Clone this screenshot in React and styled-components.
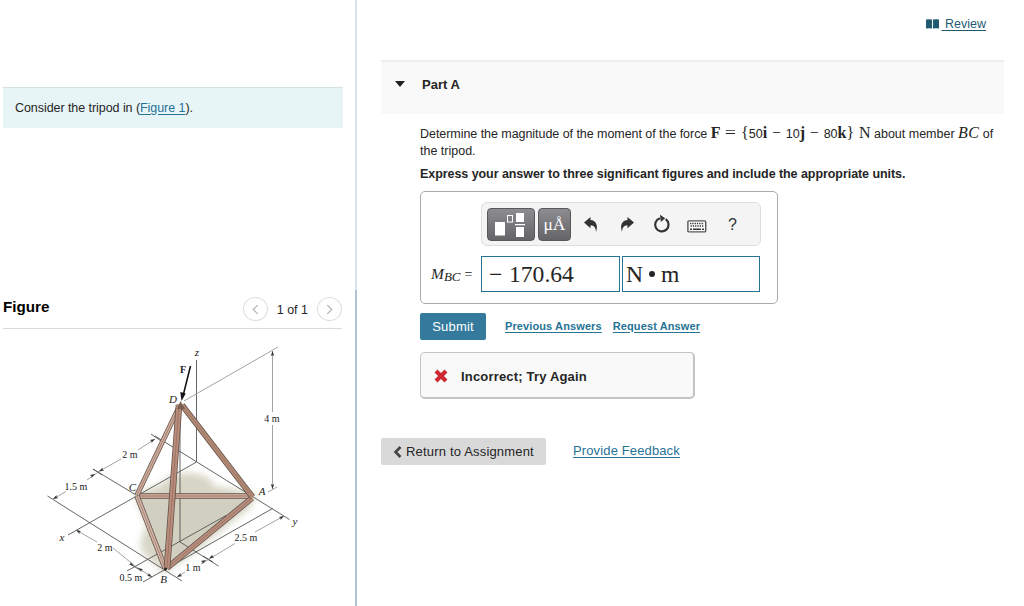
import styled, { createGlobalStyle } from "styled-components";

const bars = [
    { id: "CA", from: [138, 496], to: [250, 496], color: "#c9a294", width: 5.6 },
    { id: "CB", from: [137, 496], to: [165, 568], color: "#d3b3a4", width: 5.4 },
    { id: "DC", from: [180, 405], to: [137, 495], color: "#cfac9b", width: 5.2 },
    { id: "BA", from: [167, 568], to: [252, 498], color: "#b98d7c", width: 6 },
    { id: "DA", from: [182, 405], to: [252.5, 497], color: "#b58a75", width: 6 },
    { id: "DB", from: [179, 405], to: [167, 568], color: "#b98c7a", width: 6.6 },
]

const guides = [
    "M196.5 360V461.5",
    "M155 436L289.5 519.5",
    "M196.5 462L68 535",
    "M93 469L136 495",
    "M47.5 496L182 581",
    "M180 405V542",
    "M226 515.5L127 571",
    "M180 542L218.5 566",
    "M272.5 508.5L143 582",
]

const dimensions = [
    "M184 401L278 347",
    "M272.5 351V412M272.5 425V489",
    "M268 492L277 487",
    "M97 472.5L121 459M138 450L155 439",
    "M97 473L87 480M66 491.5L53 499",
    "M76 530L97 542M113 548L135 566L152 577",
    "M177 577L185 572M201 564L235 543.5M255 532L284 516",
]

const heads = [
    [272.5, 351, -90], [272.5, 489, 90], [155, 439, -30], [99, 471.5, 150],
    [95, 474, -30], [53, 499, 150], [76, 530, 210], [134, 566, 32],
    [138, 568, 212], [152, 577, 32], [177, 577, 150], [206, 560, -30],
    [209, 558.5, 150], [284, 516, -30],
]

const labels = [
    { text: "z", x: 197, y: 356, italic: true },
    { text: "F", x: 183, y: 373, bold: true },
    { text: "D", x: 173, y: 402.5, italic: true },
    { text: "C", x: 132.5, y: 491, italic: true },
    { text: "A", x: 262, y: 495, italic: true },
    { text: "B", x: 163.5, y: 583, italic: true },
    { text: "x", x: 62, y: 541, italic: true },
    { text: "y", x: 295, y: 525, italic: true },
    { text: "4 m", x: 272, y: 422 },
    { text: "2 m", x: 130, y: 458 },
    { text: "1.5 m", x: 76, y: 489.5 },
    { text: "2 m", x: 105, y: 551 },
    { text: "0.5 m", x: 131, y: 580.5 },
    { text: "1 m", x: 193, y: 570.5 },
    { text: "2.5 m", x: 246, y: 541 },
]

function Bar({ from, to, color, width }){
    const line = `M${from}L${to}`
    return(
        <g fill="none">
            <path d={line} stroke="#5f5049" strokeWidth={width}/>
            <path d={line} stroke={color} strokeWidth={width - 1.5}/>
            <path d={line} stroke="#7d6358" strokeWidth="0.5"/>
        </g>
    )
}

function Tripod(){
    return(
        <Drawing viewBox="0 340 343 260">
            <defs>
                <filter id="soft" x="-20%" y="-20%" width="140%" height="140%">
                    <feGaussianBlur stdDeviation="3.5"/>
                </filter>
            </defs>
            <path d="M134 494L160 485Q170 473 188 473Q211 474 214 486L257 493L250 508L190 556L164 573L143 553Q137 543 147 526Z" fill="#d7d5c6" filter="url(#soft)"/>
            <path d="M138 498H250L166 567Z" fill="#d0cfc0"/>
            <g stroke="#555" strokeWidth="0.9" fill="none">
                {guides.map((d)=> <path key={d} d={d}/>)}
            </g>
            <g stroke="#999" strokeWidth="0.9" fill="none">
                {dimensions.map((d)=> <path key={d} d={d}/>)}
            </g>
            <g fill="#333">
                {heads.map(([x, y, angle])=>(
                    <path key={`${x}-${y}`} d="M0 0L-5 -1.7L-4 0L-5 1.7Z" transform={`translate(${x} ${y}) rotate(${angle})`}/>
                ))}
            </g>
            <path d="M93 469L102 475M151 434L161 441M130 564L140 570M203 556L213 562" stroke="#555" strokeWidth="0.9"/>
            {bars.map((b)=> <Bar key={b.id} {...b}/>)}
            <path d="M177 409L180.5 401L185 409Z" fill="#7a5f54"/>
            <circle cx="165.5" cy="569" r="1.5" fill="#222"/>
            <path d="M190.5 366L183.5 394" stroke="#111" strokeWidth="1.6"/>
            <path d="M181.5 401L180.3 392L185.700 393.5Z" fill="#111"/>
            {labels.map((l)=>(
                <Label key={l.text + l.x} x={l.x} y={l.y} $italic={l.italic} $bold={l.bold}>{l.text}</Label>
            ))}
        </Drawing>
    )
}

function UndoIcon(){
    return(
        <svg width="14" height="15" viewBox="0 0 14 15">
            <path d="M0 5.5L6.5 0V3C11.500 3.300 14.500 7.500 12 15C11.800 10.500 10 8.500 6.500 8.300V11.200Z" fill="#333"/>
        </svg>
    )
}

function RedoIcon(){
    return(
        <svg width="14" height="15" viewBox="0 0 14 15">
            <path d="M14 5.5L7.5 0V3C2.500 3.300 -0.500 7.500 2 15C2.200 10.500 4 8.500 7.500 8.300V11.200Z" fill="#333"/>
        </svg>
    )
}

function RefreshIcon(){
    return(
        <svg width="18" height="20" viewBox="0 0 18 20">
            <path d="M12.600 5.200A6.700 6.700 0 1 1 7 4.300" fill="none" stroke="#333" strokeWidth="2.2"/>
            <path d="M7 0.800L12.200 4.200L7.800 8Z" fill="#333"/>
        </svg>
    )
}

function KeyboardIcon(){
    return(
        <svg width="20" height="13" viewBox="0 0 20 13">
            <rect x="0.9" y="0.9" width="17.8" height="11" rx="1" fill="#fff" stroke="#555" strokeWidth="1.4"/>
            <path d="M3 3.6H17M3.5 6H17" stroke="#333" strokeWidth="1.5" strokeDasharray="1.3 1"/>
            <path d="M3 9.2H5M6 9.2H14M15 9.2H17" stroke="#333" strokeWidth="1.4"/>
        </svg>
    )
}

function TemplateIcon(){
    return(
        <svg width="32" height="26" viewBox="0 0 32 26">
            <path d="M0 10H10V23.5H0ZM21 1H29V10H21ZM21 15H29V25H21ZM20 12H30V13.2H20Z" fill="#fff"/>
            <rect x="12.5" y="3.5" width="5" height="6.5" fill="none" stroke="#fff"/>
        </svg>
    )
}

export default function App(){
    return(
        <>
        <GlobalStyle/>
        <Page>
            <Sidebar>
                <Intro>Consider the tripod in (<Link>Figure 1</Link>).</Intro>
                <FigureHeader>
                    <h2>Figure</h2>
                    <Pager>
                        <RoundButton><Chevron viewBox="0 0 8 12"><path d="M6.5 1L1.5 6L6.5 11"/></Chevron></RoundButton>
                        <span>1 of 1</span>
                        <RoundButton><Chevron viewBox="0 0 8 12"><path d="M1.5 1L6.5 6L1.5 11"/></Chevron></RoundButton>
                    </Pager>
                </FigureHeader>
                <Tripod/>
            </Sidebar>
            <Divider/>
            <Main>
                <TopBar>
                    <svg width="13" height="10" viewBox="0 0 13 10">
                        <path d="M0 0.6Q3 -0.3 6 0.6V9.6Q3 8.7 0 9.6ZM7 0.6Q10 -0.3 13 0.6V9.6Q10 8.7 7 9.6Z" fill="#1f5a70"/>
                    </svg>
                    <ReviewLink>&nbsp;Review</ReviewLink>
                </TopBar>
                <PartHeader>
                    <Caret/>
                    <h2>Part A</h2>
                </PartHeader>
                <Question>
                    <Problem>
                        <Copy>Determine the magnitude of the moment of the force </Copy>
                        <MathText><b>F</b> <Equals>=</Equals> {"{"}<Num>50</Num><b>i</b> − <Num>10</Num><b>j</b> − <Num>80</Num><b>k</b>{"}"} N</MathText>
                        {" "}about member <Member>BC</Member> of<br/>the tripod.
                    </Problem>
                    <Instruction>Express your answer to three significant figures and include the appropriate units.</Instruction>
                    <AnswerBox>
                        <Toolbar>
                            <DarkButton $width={48}><TemplateIcon/></DarkButton>
                            <DarkButton $width={33}>μÅ</DarkButton>
                            <Tools>
                                <UndoIcon/>
                                <RedoIcon/>
                                <RefreshIcon/>
                                <KeyboardIcon/>
                                <span>?</span>
                            </Tools>
                        </Toolbar>
                        <AnswerRow>
                            <Variable><em>M<sub>BC</sub></em> <span>=</span></Variable>
                            <Field $width={139} $pad={7}><Minus>−</Minus>170.64</Field>
                            <Field $width={138} $pad={3}>N<Dot/>m</Field>
                        </AnswerRow>
                    </AnswerBox>
                    <Actions>
                        <Submit>Submit</Submit>
                        <SmallLink>Previous Answers</SmallLink>
                        <SmallLink>Request Answer</SmallLink>
                    </Actions>
                    <Feedback>
                        <svg width="14" height="14" viewBox="0 0 14 14">
                            <path d="M2 2L12 12M12 2L2 12" stroke="#cc2a30" strokeWidth="4.2"/>
                        </svg>
                        Incorrect; Try Again
                    </Feedback>
                </Question>
                <Footer>
                    <ReturnButton>
                        <svg width="9" height="12" viewBox="0 0 9 12">
                            <path d="M7.5 1L2.5 6L7.5 11" fill="none" stroke="#444" strokeWidth="2.6"/>
                        </svg>
                        Return to Assignment
                    </ReturnButton>
                    <FooterLink>Provide Feedback</FooterLink>
                </Footer>
            </Main>
        </Page>
        </>
    )
}

const GlobalStyle = createGlobalStyle`
    * {
        box-sizing: border-box;
    }
    body{
        margin: 0;
        background-color: #fff;
        color: #252525;
        font-family: "Liberation Sans", Arial, sans-serif;
        font-size: 13px;
    }
    h2, p{
        margin: 0;
    }
    button{
        font-family: inherit;
        border: none;
        padding: 0;
    }
`

const Page = styled.div`
    width: 1024px;
    height: 606px;
    display: flex;
    overflow: hidden;
`

const Sidebar = styled.aside`
    width: 355px;
    padding: 87px 12px 0 3px;
`

const Divider = styled.div`
    width: 2px;
    background: linear-gradient(#d9e3f0 290px, #b3c3d7 290px);
`

const Main = styled.main`
    flex: 1;
    padding-left: 24px;
`

const Intro = styled.div`
    height: 41px;
    padding-left: 12px;
    display: flex;
    align-items: center;
    white-space: pre;
    background-color: #e8f5f7;
    border-top: 1px solid #d5e1e3;
    font-size: 12.5px;
    letter-spacing: -0.06px;
`

const Link = styled.a`
    color: #267396;
    text-decoration: underline;
    text-underline-offset: 2px;
`

const FigureHeader = styled.div`
    width: 339px;
    height: 39px;
    margin-top: 162px;
    display: flex;
    justify-content: space-between;
    border-bottom: 1px solid #d9d9d9;
    h2{
        padding-top: 7px;
        font-size: 15.2px;
        line-height: 19px;
        color: #000;
    }
`

const Pager = styled.div`
    display: flex;
    gap: 9px;
    padding-top: 7px;
    span{
        padding-top: 6px;
        font-size: 12.5px;
        line-height: 15px;
    }
`

const RoundButton = styled.button`
    width: 25px;
    height: 24px;
    display: flex;
    align-items: center;
    justify-content: center;
    background-color: #fff;
    border: 1px solid #dedede;
    border-radius: 50%;
`

const Chevron = styled.svg`
    width: 7px;
    height: 11px;
    fill: none;
    stroke: #b5b5b5;
    stroke-width: 1.5;
`

const Drawing = styled.svg`
    display: block;
    width: 343px;
    height: 260px;
    margin: 11px 0 0 -3px;
`

const Label = styled.text`
    font-family: "Liberation Serif", serif;
    font-size: ${(p)=> p.$italic ? 11 : 10}px;
    font-style: ${(p)=> p.$italic ? "italic" : "normal"};
    font-weight: ${(p)=> p.$bold ? 700 : 400};
    text-anchor: middle;
    fill: #222;
`

const TopBar = styled.div`
    height: 60px;
    padding: 16px 38px 0 0;
    display: flex;
    justify-content: flex-end;
    gap: 3px;
    svg{
        margin-top: 3px;
    }
`

const ReviewLink = styled.a`
    color: #1f5a70;
    font-size: 12.5px;
    line-height: 17px;
    text-decoration: underline;
    text-underline-offset: 2px;
`

const PartHeader = styled.div`
    width: 623px;
    height: 54px;
    padding: 0 0 8px 14px;
    display: flex;
    align-items: center;
    gap: 17px;
    background-color: #f9f9f9;
    border-top: 2px solid #ededed;
    h2{
        font-size: 13px;
    }
`

const Caret = styled.div`
    border: 5px solid transparent;
    border-top: 6px solid #222;
    border-bottom: none;
`

const Question = styled.section`
    padding: 11px 0 0 39px;
`

const Problem = styled.p`
    height: 42px;
    line-height: 17px;
    font-size: 12.5px;
    white-space: nowrap;
`

const Copy = styled.span`
    letter-spacing: -0.05px;
`

const MathText = styled.span`
    font-family: "Liberation Serif", serif;
    font-size: 16px;
    line-height: 1;
    word-spacing: 0.8px;
`

const Equals = styled.span`
    display: inline-block;
    transform: scaleX(1.25);
    margin: 0 1px;
`

const Member = styled.em`
    font-family: "Liberation Serif", serif;
    font-size: 16px;
    line-height: 1;
    letter-spacing: 0.4px;
`

const Num = styled.span`
    font-family: "Liberation Sans", Arial, sans-serif;
    font-size: 12.5px;
`

const Instruction = styled.p`
    height: 24px;
    font-size: 12.5px;
    line-height: 15px;
    font-weight: 700;
    letter-spacing: -0.06px;
    white-space: nowrap;
`

const AnswerBox = styled.div`
    width: 358px;
    height: 113px;
    padding: 10px 16px 0 0;
    border: 1px solid #aaa;
    border-radius: 5px;
`

const Toolbar = styled.div`
    width: 280px;
    height: 44px;
    margin-left: 60px;
    padding-left: 5px;
    display: flex;
    align-items: center;
    gap: 3px;
    background-color: #f4f4f4;
    border: 1px solid #dedede;
    border-radius: 6px;
`

const DarkButton = styled.button`
    width: ${(p)=> p.$width}px;
    height: 33px;
    display: flex;
    align-items: center;
    justify-content: center;
    background: linear-gradient(#8c8c91, #656568);
    border: 1px solid #58585a;
    border-radius: 4px;
    color: #fff;
    font-family: "Liberation Serif", serif;
    font-size: 17.5px;
    padding-top: 1px;
`

const Tools = styled.div`
    flex: 1;
    height: 100%;
    padding-left: 10px;
    display: grid;
    grid-template-columns: 36px 35px 35px 35px 20px;
    align-items: center;
    color: #333;
    svg{
        justify-self: start;
    }
    svg:nth-child(3){
        margin-left: -2px;
    }
    svg:nth-child(4){
        margin: 4px 0 0 -3px;
    }
    span{
        padding: 1px 0 0 3px;
        font-size: 16px;
    }
`

const AnswerRow = styled.div`
    display: flex;
    align-items: center;
    gap: 2px;
    margin-top: 10px;
`

const Variable = styled.div`
    width: 58px;
    padding-left: 10px;
    white-space: nowrap;
    font-family: "Liberation Serif", serif;
    font-size: 15.5px;
    sub{
        font-size: 13px;
        line-height: 0;
        vertical-align: -2px;
    }
    span{
        font-size: 14px;
    }
`

const Field = styled.div`
    width: ${(p)=> p.$width}px;
    height: 36px;
    padding-left: ${(p)=> p.$pad}px;
    display: flex;
    align-items: center;
    border: 1px solid #267396;
    font-family: "Liberation Serif", serif;
    font-size: 23.6px;
`

const Minus = styled.span`
    width: 20px;
`

const Dot = styled.span`
    width: 6px;
    height: 6px;
    margin: 0 6px;
    border-radius: 50%;
    background-color: #252525;
`

const Actions = styled.div`
    display: flex;
    align-items: center;
    margin-top: 9px;
`

const Submit = styled.button`
    width: 66px;
    height: 27px;
    margin-right: 19px;
    background-color: #347a9c;
    border-radius: 2px;
    color: #fff;
    font-size: 13px;
    letter-spacing: 0.2px;
`

const SmallLink = styled(Link)`
    margin-right: 11px;
    padding-bottom: 2px;
    font-size: 11px;
    font-weight: 700;
    letter-spacing: 0.11px;
`

const Feedback = styled.div`
    width: 275px;
    height: 47px;
    margin-top: 12px;
    padding: 2px 0 0 13px;
    display: flex;
    align-items: center;
    gap: 13px;
    background-color: #f9f9f9;
    border: 1px solid #c4c4c4;
    border-right-width: 2px;
    border-bottom-width: 2px;
    border-radius: 5px;
    font-weight: 700;
    letter-spacing: 0.18px;
`

const Footer = styled.div`
    display: flex;
    align-items: center;
    gap: 27px;
    margin-top: 39px;
`

const ReturnButton = styled.button`
    width: 165px;
    height: 27px;
    padding-left: 12px;
    display: flex;
    align-items: center;
    gap: 4px;
    background-color: #d9d9d9;
    border-radius: 2px;
    color: #252525;
    font-size: 13px;
    letter-spacing: 0.18px;
`

const FooterLink = styled(Link)`
    padding-bottom: 2px;
    letter-spacing: 0.13px;
`
